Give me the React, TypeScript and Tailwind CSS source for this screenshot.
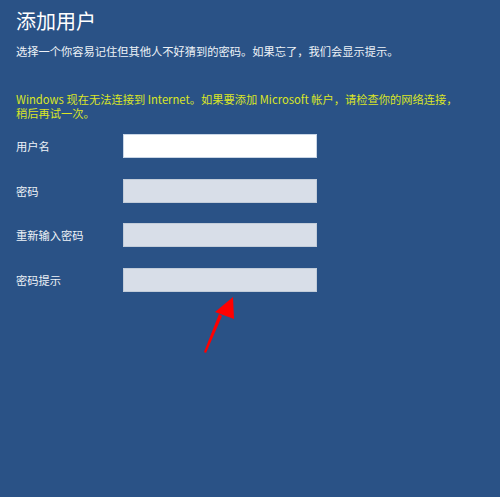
import React from 'react'

const fields = [
  { label: '用户名', active: true },
  { label: '密码', active: false },
  { label: '重新输入密码', active: false },
  { label: '密码提示', active: false },
]

export default function App() {
  return (
    <div
      className="relative w-full h-[497px] overflow-hidden bg-[#2a5286] px-4 pt-[8px] text-[#eef2f7]"
      style={{ fontFamily: '"Noto Sans CJK SC", "Noto Sans", sans-serif' }}
    >
      <h1 className="text-[20px] leading-[26px] font-normal text-white">添加用户</h1>
      <p className="mt-[10px] text-[11.25px] leading-[14px] whitespace-nowrap">
        选择一个你容易记住但其他人不好猜到的密码。如果忘了，我们会显示提示。
      </p>

      <div className="mt-[34px] text-[11.25px] leading-[14px] whitespace-nowrap text-[#dbe625]">
        <div>Windows 现在无法连接到 Internet。如果要添加 Microsoft 帐户，请检查你的网络连接，</div>
        <div>稍后再试一次。</div>
      </div>

      <div className="mt-[14px] flex flex-col gap-[20.5px]">
        {fields.map(f => (
          <div key={f.label} className="flex items-center">
            <span className="w-[107px] text-[11.25px] leading-[14px]">{f.label}</span>
            <div
              className={`w-[194px] h-[24px] border ${
                f.active ? 'bg-white border-[#c9d6e6]' : 'bg-[#d8dee8] border-[#c2ccd9]'
              }`}
            />
          </div>
        ))}
      </div>

      {/* red arrow annotation */}
      <svg className="absolute left-[196px] top-[292px]" width="44" height="66" viewBox="0 0 44 66">
        <polygon points="8,60 10,61 26,24 23,22" fill="#ff0000" />
        <polygon points="37,5 38,27 19,20" fill="#ff0000" />
      </svg>
    </div>
  )
}
